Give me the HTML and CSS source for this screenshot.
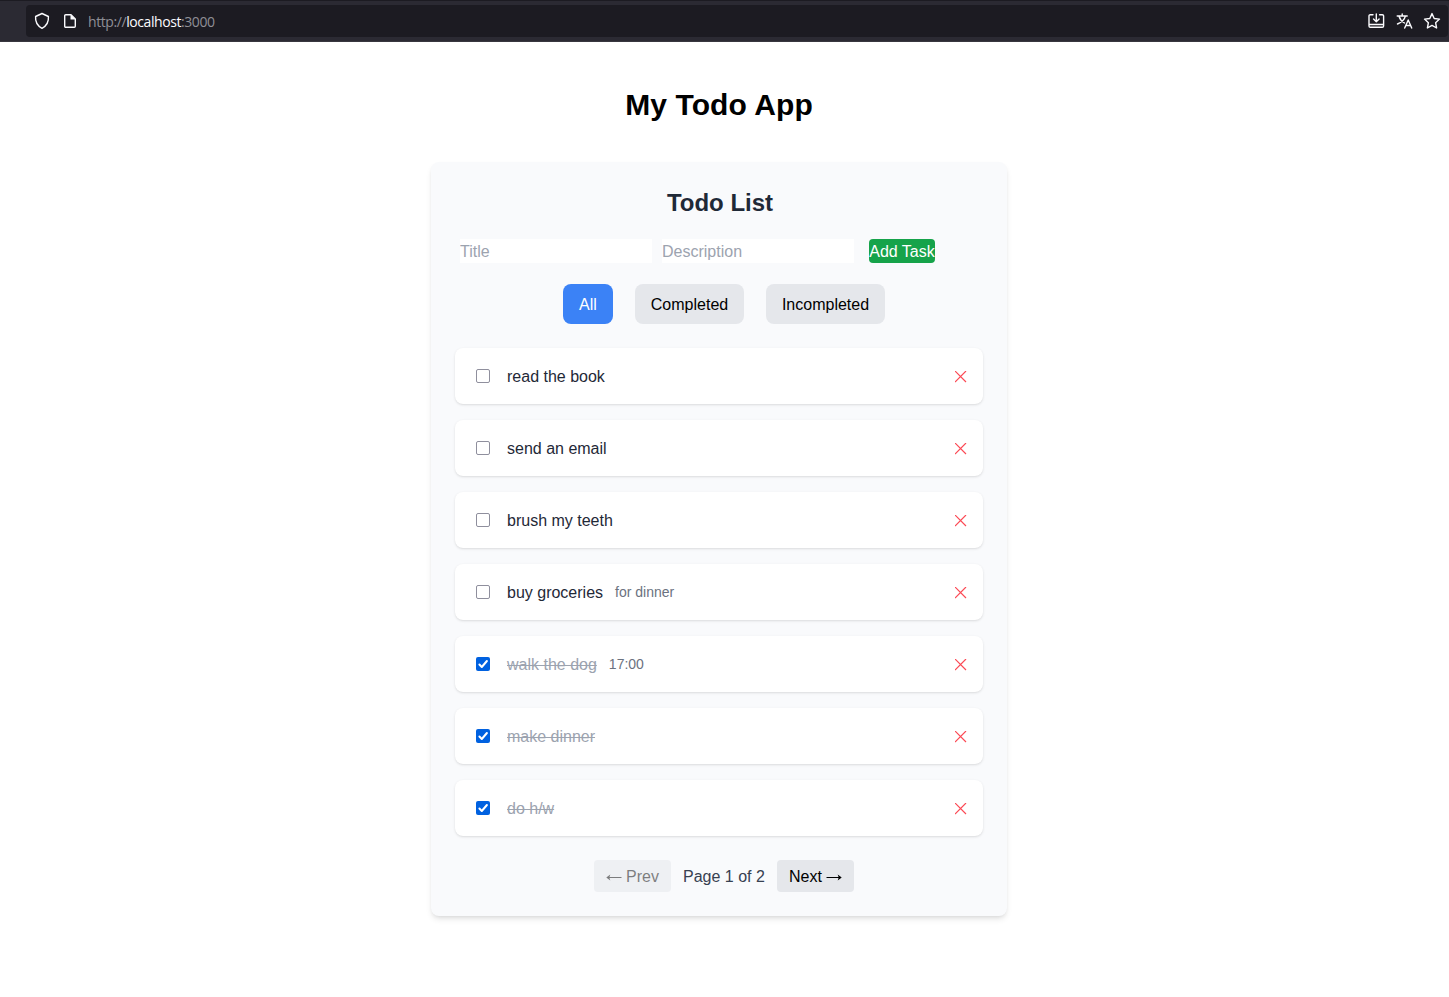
FILE: index.html
```html
<!DOCTYPE html>
<html lang="en">
<head>
<meta charset="utf-8">
<title>My Todo App</title>
<link rel="stylesheet" href="styles.css">
</head>
<body>
<svg class="defs" width="0" height="0"><defs>
<symbol id="x" viewBox="0 0 12 12"><path d="M0 0 11 11M11 0 0 11" fill="none" stroke="#fb4a55" stroke-width="1.2"/></symbol>
<symbol id="check" viewBox="0 0 14 14"><path d="M3.400 7.500 5.800 10 10.900 4" fill="none" stroke="#fff" stroke-width="2" stroke-linecap="round" stroke-linejoin="round"/></symbol>
</defs></svg>
<header class="browser">
  <div class="urlbar">
    <svg class="icon" width="16" height="18" viewBox="0 0 16 18"><path d="M8 1.500 14.400 4.500C14.800 9.200 12.600 13.800 8 16.300 3.400 13.800 1.200 9.200 1.600 4.500Z"/></svg>
    <svg class="icon page-icon" width="14" height="16" viewBox="0 0 14 16"><path d="M2.700 1.700H8L12.300 6v7.300a1 1 0 0 1-1 1H2.700a1 1 0 0 1-1-1V2.700a1 1 0 0 1 1-1Z"/><path class="solid" d="M7.500 1.500v5h5Z"/></svg>
    <span class="url">http://<b>localhost</b>:3000</span>
    <div class="tools">
      <svg class="icon" width="18" height="16" viewBox="0 0 18 16"><path d="M6 1.700H3.300A1.300 1.300 0 0 0 2 3v10a1.300 1.300 0 0 0 1.300 1.300h12a1.300 1.300 0 0 0 1.300-1.300V3a1.300 1.300 0 0 0-1.300-1.300h-2.700M2.300 11.500h14M9.300 1v7.700M6.500 6l2.800 2.800L12.100 6"/></svg>
      <svg class="icon" width="17" height="17" viewBox="0 0 17 17"><path d="M1.200 3h10M6.200 1v2M3 3.200C4 6.500 6 8.600 8.500 10M9.400 3.200C8.500 6.800 5 9.600 1.500 11M8.700 15l3.500-8 3.500 8M9.900 12.500h4.600"/></svg>
      <svg class="icon" width="18" height="18" viewBox="0 0 18 18"><path d="m9 1.600 2.200 4.900 5.300.6-3.900 3.600 1 5.300L9 13.400 4.400 16l1-5.300L1.500 7.100l5.300-.6Z"/></svg>
    </div>
  </div>
</header>
<main class="app">
  <h1 class="app-title">My Todo App</h1>
  <section class="card">
    <h2 class="card-title">Todo List</h2>
    <form class="add-form">
      <input class="field" type="text" placeholder="Title">
      <input class="field" type="text" placeholder="Description">
      <button class="add" type="button">Add Task</button>
    </form>
    <div class="filters">
      <button class="filter active">All</button>
      <button class="filter completed">Completed</button>
      <button class="filter incompleted">Incompleted</button>
    </div>
    <ul class="list">
      <li class="task"><span class="box"></span><span class="name">read the book</span><svg class="delete"><use href="#x"/></svg></li>
      <li class="task"><span class="box"></span><span class="name">send an email</span><svg class="delete"><use href="#x"/></svg></li>
      <li class="task"><span class="box"></span><span class="name">brush my teeth</span><svg class="delete"><use href="#x"/></svg></li>
      <li class="task"><span class="box"></span><span class="name">buy groceries</span><span class="note">for dinner</span><svg class="delete"><use href="#x"/></svg></li>
      <li class="task done"><svg class="box"><use href="#check"/></svg><span class="name">walk the dog</span><span class="note">17:00</span><svg class="delete"><use href="#x"/></svg></li>
      <li class="task done"><svg class="box"><use href="#check"/></svg><span class="name">make dinner</span><svg class="delete"><use href="#x"/></svg></li>
      <li class="task done"><svg class="box"><use href="#check"/></svg><span class="name">do h/w</span><svg class="delete"><use href="#x"/></svg></li>
    </ul>
    <nav class="pager">
      <button class="page-btn" disabled><svg class="arrow" viewBox="0 0 16 8"><path d="M1 3.500h14.500"/><path class="head" d="M.3 3.500 4.300.6 3.300 3.500 4.300 6.400Z"/></svg>Prev</button>
      <span class="page-info">Page 1 of 2</span>
      <button class="page-btn">Next<svg class="arrow next" viewBox="0 0 16 8"><path d="M.5 3.500H15"/><path class="head" d="M15.700 3.500 11.700.6l1 2.900-1 2.900Z"/></svg></button>
    </nav>
  </section>
</main>
</body>
</html>
```
FILE: styles.css
```css
* { box-sizing: border-box; }
body { margin: 0; min-height: 997px; background: #fff; font: 16px/24px "Liberation Sans", Arial, sans-serif; color: #000; }
button, input { font: inherit; border: 0; padding: 0; margin: 0; }
.defs { display: block; height: 0; }

.browser { height: 42px; background: #2b2a33; border-top: 1px solid #1c1b22; border-bottom: 1px solid #38373f; padding: 4px 1px 4px 26px; }
.urlbar { height: 32px; background: #1c1b22; border-radius: 4px; display: flex; align-items: center; padding: 0 7px 0 8px; }
.icon { display: block; flex: none; fill: none; stroke: #fbfbfe; stroke-width: 1.4; stroke-linejoin: round; stroke-linecap: round; }
.icon .solid { fill: #fbfbfe; stroke: none; }
.page-icon { margin-left: 13px; }
.url { margin-left: 11px; font: 14px/20px "Open Sans", "Noto Sans", sans-serif; letter-spacing: -0.42px; color: #8f8f96; padding-top: 2px; }
.url b { font-weight: 400; color: #fbfbfe; }
.tools { margin-left: auto; display: flex; align-items: center; gap: 10.500px; }

.app { width: 576px; margin: 0 auto 0 431px; padding-top: 45px; }
.app-title { margin: 0 0 39px; font-size: 30px; line-height: 36px; letter-spacing: .1px; text-align: center; }
.card { height: 754px; padding: 25px 24px 24px; background: #f9fafc; border-radius: 8px; box-shadow: 0 4px 6px -1px rgba(0,0,0,.1), 0 2px 4px -2px rgba(0,0,0,.1); }
.card-title { margin: 0 0 20px; padding-left: 2px; font-size: 24px; line-height: 32px; color: #1f2937; text-align: center; }
.add-form { display: flex; gap: 10px; padding-left: 5px; }
.field { width: 192px; height: 24px; padding-top: 2px; background: #fff; }
.field::placeholder { color: #9ca3af; opacity: 1; }
.add { width: 66px; height: 24px; padding-top: 2px; line-height: 22px; margin-left: 5px; border-radius: 4px; background: #16a34a; color: #fff; white-space: nowrap; }
.filters { display: flex; gap: 22px; margin: 21px 0 24px 108px; }
.filter { width: 50px; height: 40px; padding-top: 2px; border-radius: 8px; background: #e5e7eb; color: #000; }
.filter.active { background: #3b82f6; color: #fff; }
.filter.completed { width: 109px; }
.filter.incompleted { width: 119px; }

.list { list-style: none; margin: 0; padding: 0; display: flex; flex-direction: column; gap: 16px; }
.task { height: 56px; display: flex; align-items: center; padding: 0 16px 0 21px; background: #fff; border-radius: 8px; box-shadow: 0 1px 3px rgba(0,0,0,.1), 0 1px 2px -1px rgba(0,0,0,.1); }
.box { width: 14px; height: 14px; margin-right: 17px; border: 1px solid #8f8f9d; border-radius: 2px; background: #fff; }
.name { padding-top: 2px; color: #1f2937; }
.done .box { border: 0; background: #0061e0; }
.done .name { color: #9ca3af; text-decoration: line-through; }
.note { margin-left: 12px; font-size: 14px; line-height: 20px; color: #6b7280; }
.delete { width: 12px; height: 12px; margin: 1px 0 0 auto; }

.pager { display: flex; gap: 12px; margin: 24px 0 0 139px; align-items: center; }
.page-btn { width: 77px; height: 32px; padding: 2px 12px 0; display: flex; align-items: center; justify-content: space-between; border-radius: 4px; background: #e5e7eb; color: #000; white-space: nowrap; }
.page-btn:disabled { opacity: .5; }
.arrow { width: 16px; height: 8px; margin-top: 1px; fill: none; stroke: currentColor; stroke-width: 1; }
.arrow .head { fill: currentColor; stroke: none; }
.page-info { width: 82px; padding-top: 2px; color: #374151; white-space: nowrap; }
```
